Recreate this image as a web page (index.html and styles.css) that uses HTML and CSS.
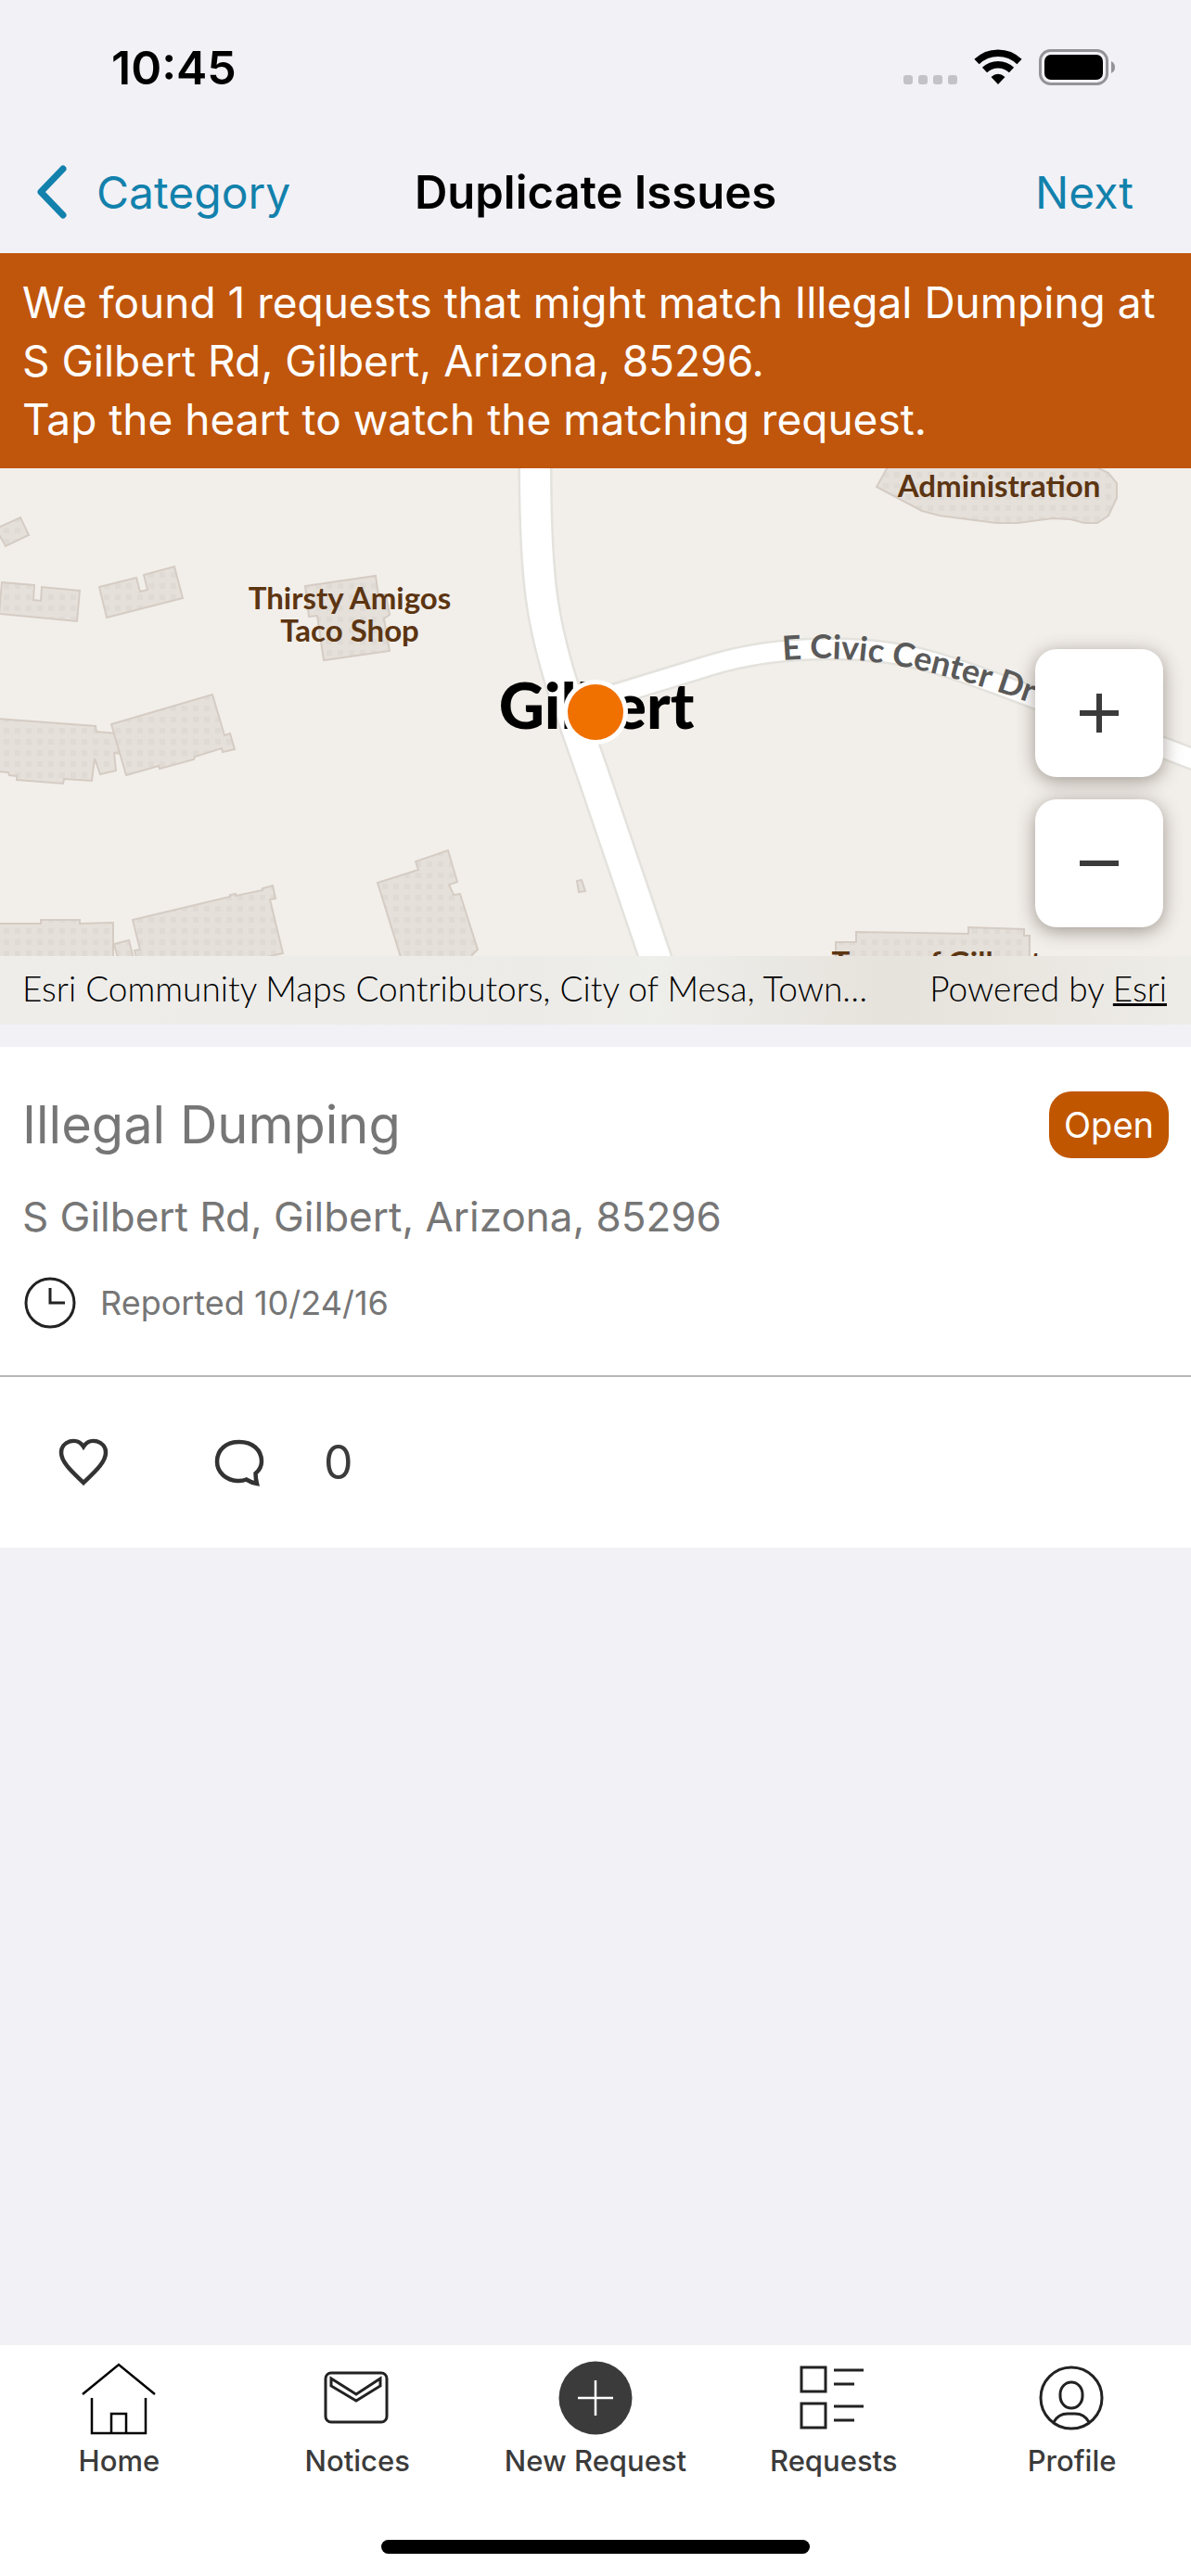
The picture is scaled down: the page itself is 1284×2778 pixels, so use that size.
FILE: index.html
```
<!DOCTYPE html>
<html lang="en">
<head>
  <meta charset="UTF-8" />
  <meta name="viewport" content="width=device-width, initial-scale=1.0"/>
  <title>Duplicate Issues</title>
  <link rel="stylesheet" href="styles.css">
</head>
<body>
  <div class="app">
    <!-- Status bar -->
    <div class="status-bar">
      <span class="time">10:45</span>
      <div class="status-icons">
        <svg width="58" height="39" viewBox="0 0 58 39" fill="#c3c2c7">
          <rect x="0" y="28" width="10" height="10" rx="3"/>
          <rect x="16" y="28" width="10" height="10" rx="3"/>
          <rect x="32" y="28" width="10" height="10" rx="3"/>
          <rect x="48" y="28" width="10" height="10" rx="3"/>
        </svg>
        <svg width="52" height="39" viewBox="0 0 52 39" fill="none" stroke="#000">
          <path d="M3 13.5 A33 33 0 0 1 49 13.5" stroke-width="7.5"/>
          <path d="M11.5 22.5 A21 21 0 0 1 40.5 22.5" stroke-width="7.5"/>
          <path d="M18.5 30 Q26 23.5 33.5 30 L26 38 Z" fill="#000" stroke="none"/>
        </svg>
        <svg width="83" height="39" viewBox="0 0 83 39">
          <rect x="1.5" y="1.5" width="72" height="36" rx="11" fill="none" stroke="#949397" stroke-width="3"/>
          <rect x="6" y="6" width="63" height="27" rx="7"/>
          <path d="M78 13 Q82 15 82 19.5 Q82 24 78 26 Z" fill="#949397"/>
        </svg>
      </div>
    </div>

    <!-- Navigation -->
    <header class="nav-bar">
      <button class="nav-btn back">
        <svg width="32" height="58" viewBox="0 0 32 58" fill="none" stroke="#1281ac" stroke-width="7" stroke-linecap="round" stroke-linejoin="round">
          <path d="M28 4 L4 29 L28 54"/>
        </svg>
        Category
      </button>
      <h1>Duplicate Issues</h1>
      <button class="nav-btn next">Next</button>
    </header>

    <main class="main">
      <p class="banner">We found 1 requests that might match Illegal Dumping at S Gilbert Rd, Gilbert, Arizona, 85296.<br>Tap the heart to watch the matching request.</p>

      <!-- Map -->
      <section class="map">
        <svg class="map-canvas" viewBox="0 0 1284 600" preserveAspectRatio="xMidYMid slice">
          <defs>
            <pattern id="dots" width="12" height="12" patternUnits="userSpaceOnUse">
              <rect width="12" height="12" fill="#e5e0da"/>
              <rect x="4" y="4" width="6" height="6" fill="#dfdad4"/>
            </pattern>
            <path id="civicLabel" d="M844 207 C930 200 1010 212 1180 279"/>
          </defs>

          <!-- buildings -->
          <g fill="url(#dots)" stroke="#d5ccc4" stroke-width="2">
            <path d="M-4 65 L22 53 L31 72 L6 84 L-4 66 Z"/>
            <path d="M2 123 L37 126 L36 142 L44 143 L45 128 L86 132 L83 165 L-1 157 Z"/>
            <path d="M107 128 L147 118 L151 133 L159 131 L155 115 L188 106 L197 140 L115 161 Z"/>
            <path d="M329 127 L405 116 L408 137 L416 136 L420 158 L414 162 L420 197 L349 207 L342 159 L333 160 Z"/>
            <path d="M-4 270 L103 278 L104 284 L126 286 L132 308 L123 307 L125 326 L108 330 L102 313 L99 337 L69 335 L68 340 L18 336 L18 332 L10 331 L9 328 L-4 327 Z"/>
            <path d="M120 276 L229 244 L242 288 L248 286 L253 303 L240 306 L239 302 L210 311 L209 314 L172 324 L171 321 L136 331 Z"/>
            <path d="M-4 491 L44 491 L44 487 L86 487 L86 491 L122 490 L122 540 L-4 540 Z"/>
            <path d="M123 513 L139 509 L142 521 L147 540 L130 540 Z"/>
            <path d="M143 487 L248 462 L248 460 L254 459 L254 461 L283 455 L283 453 L294 450 L297 464 L291 465 L305 523 L240 538 L150 538 L145 520 L151 519 Z"/>
            <path d="M407 447 L451 433 L448 424 L483 412 L493 446 L484 449 L489 460 L496 459 L515 519 L508 526 L510 540 L436 540 Z"/>
            <path d="M622 445 L627 444 L631 456 L624 457 Z"/>
            <path d="M959 -5 L945 20 L994 46 L1013 51 L1074 59 L1097 59 L1135 54 L1154 55 L1169 59 L1183 59 L1195 51 L1204 32 L1204 16 L1195 5 L1178 -3 Z"/>
            <path d="M901 540 L901 511 L923 511 L923 500 L1044 502 L1044 495 L1104 497 L1104 504 L1110 504 L1110 540 Z"/>
          </g>

          <!-- roads: casing first, then the white surface -->
          <g fill="none" stroke="#e4e2dd">
            <path d="M577 -6 C577 120 584 170 612 252 L640 332 L712 544" stroke-width="37"/>
            <path d="M642 250 L767 212 C840 190 940 189 1005 209 C1060 224 1170 270 1290 315" stroke-width="25"/>
          </g>
          <g fill="none" stroke="#fff">
            <path d="M577 -6 C577 120 584 170 612 252 L640 332 L712 544" stroke-width="32"/>
            <path d="M630 254 L767 212 C840 190 940 189 1005 209 C1060 224 1170 270 1290 315" stroke-width="20"/>
          </g>

          <!-- labels -->
          <g class="poi-label">
            <text x="377" y="152">Thirsty Amigos</text>
            <text x="377" y="187">Taco Shop</text>
            <text x="1077" y="31">Administration</text>
            <text x="1010" y="545">Town of Gilbert</text>
          </g>
          <text class="road-label"><textPath href="#civicLabel">E Civic Center Dr</textPath></text>
          <text class="city-label" x="643" y="281">Gilbert</text>

          <circle cx="642" cy="263" r="35" fill="#fff"/>
          <circle cx="642" cy="263" r="30" fill="#f07000"/>
        </svg>

        <div class="zoom-controls">
          <button class="zoom-btn" aria-label="Zoom in">
            <svg width="42" height="42" viewBox="0 0 42 42" stroke="#3b3b3b" stroke-width="6">
              <path d="M0 21 H42 M21 0 V42"/>
            </svg>
          </button>
          <button class="zoom-btn" aria-label="Zoom out">
            <svg width="42" height="42" viewBox="0 0 42 42" stroke="#3b3b3b" stroke-width="6">
              <path d="M0 21 H42"/>
            </svg>
          </button>
        </div>

        <div class="attribution">
          <span>Esri Community Maps Contributors, City of Mesa, Town…</span>
          <span>Powered by <a href="#">Esri</a></span>
        </div>
      </section>

      <!-- Matching request -->
      <article class="card">
        <div class="card-body">
          <div class="card-head">
            <h2>Illegal Dumping</h2>
            <span class="badge">Open</span>
          </div>
          <p class="address">S Gilbert Rd, Gilbert, Arizona, 85296</p>
          <p class="reported">
            <svg width="60" height="56" viewBox="0 0 60 56" fill="none" stroke="#222" stroke-width="3">
              <circle cx="30" cy="28" r="26"/>
              <path d="M30 12 V28 H46"/>
            </svg>
            Reported 10/24/16
          </p>
        </div>
        <div class="card-actions">
          <button class="action" aria-label="Watch request">
            <svg width="54" height="52" viewBox="0 0 54 52" fill="none" stroke="#333" stroke-width="4.5">
              <path d="M27 48 C18 39 3 27 3 15.5 C3 3 20 -2 27 9 C34 -2 51 3 51 15.5 C51 27 36 39 27 48 Z"/>
            </svg>
          </button>
          <button class="action" aria-label="Comments">
            <svg width="54" height="52" viewBox="0 0 54 52" fill="none" stroke="#333" stroke-width="4.5">
              <path d="M34.5 44.5 C31 46 29 46 26.5 46 C13 46 3 37 3 25 C3 12.5 13 4 27 4 C41 4 51 12.5 51 25 C51 31 48 35 44.500 38 Q44.5 43 46 49 Q40 48 34.5 44.5 Z"/>
            </svg>
            <span>0</span>
          </button>
        </div>
      </article>
    </main>

    <!-- Tab bar -->
    <footer class="footer">
      <nav class="tabs">
        <a class="tab" href="#">
          <svg width="80" height="80" viewBox="0 0 80 80" fill="none" stroke="#000" stroke-width="2.5">
            <path d="M1 36 L40 4 L79 36"/>
            <path d="M11 40 V78 H69 V40"/>
            <path d="M32 78 V57 H48 V78"/>
          </svg>
          Home
        </a>
        <a class="tab" href="#">
          <svg width="80" height="80" viewBox="0 0 80 80" fill="none" stroke="#222" stroke-width="3">
            <rect x="6" y="13" width="66" height="53" rx="6"/>
            <path d="M12 19 L39 36 L65 19 V27 L39 43 L12 27 Z"/>
          </svg>
          Notices
        </a>
        <a class="tab" href="#">
          <svg width="80" height="80" viewBox="0 0 80 80">
            <circle cx="40" cy="40" r="39.5" fill="#3b3b3b"/>
            <path d="M21 40 H59 M40 21 V59" stroke="#fff" stroke-width="2.5"/>
          </svg>
          New Request
        </a>
        <a class="tab" href="#">
          <svg width="80" height="80" viewBox="0 0 80 80" fill="none" stroke="#222" stroke-width="3">
            <rect x="5" y="7" width="26" height="26"/>
            <rect x="5" y="46" width="26" height="26"/>
            <path d="M40 10 H72 M40 25 H62 M40 49 H72 M40 64 H62"/>
          </svg>
          Requests
        </a>
        <a class="tab" href="#">
          <svg width="80" height="80" viewBox="0 0 80 80" fill="none" stroke="#222" stroke-width="3">
            <circle cx="39" cy="40" r="33"/>
            <rect x="27" y="23" width="24" height="28" rx="12" ry="13"/>
            <path d="M20 66 Q25 57 35 57 H43 Q53 57 58 66"/>
          </svg>
          Profile
        </a>
      </nav>
      <div class="home-indicator"></div>
    </footer>
  </div>
</body>
</html>
```
FILE: styles.css
```
* {
  box-sizing: border-box;
}

body {
  margin: 0;
  font-family: Inter, 'Liberation Sans', sans-serif;
  background-color: #f2f1f6;
  color: #000;
}

h1, h2, p {
  margin: 0;
  font-weight: 400;
}

button {
  font-family: inherit;
  border: none;
  padding: 0;
  background: none;
  cursor: pointer;
}

svg {
  display: block;
  flex-shrink: 0;
}

.app {
  display: flex;
  flex-direction: column;
  min-height: 100vh;
}

.status-bar {
  display: flex;
  justify-content: space-between;
  align-items: center;
  height: 145px;
  padding: 0 81px 0 120px;
}

.time {
  font-size: 50px;
  font-weight: 600;
}

.status-icons {
  display: flex;
  gap: 18px;
}

.nav-bar {
  display: grid;
  grid-template-columns: 1fr auto 1fr;
  align-items: center;
  height: 128px;
  padding-bottom: 4px;
}

.nav-bar h1 {
  font-size: 49px;
  font-weight: 600;
}

.nav-btn {
  display: flex;
  align-items: center;
  gap: 32px;
  color: #1281ac;
  font-size: 48px;
}

.back {
  padding-left: 40px;
}

.next {
  justify-self: end;
  padding-right: 62px;
}

.main {
  flex-grow: 1;
}

.banner {
  padding: 22px 24px 21px;
  background-color: #c0560c;
  color: #fff;
  font-size: 46px;
  line-height: 63px;
}

/* Map */
.map {
  position: relative;
  height: 600px;
  background-color: #f2efea;
  overflow: hidden;
}

.map-canvas {
  width: 100%;
  height: 100%;
}

.map text {
  font-family: Lato, sans-serif;
  font-weight: 700;
}

.poi-label {
  font-size: 33px;
  fill: #5c3512;
  text-anchor: middle;
}

.road-label {
  font-size: 36px;
  fill: #5a5a5a;
}

.map .city-label {
  font-size: 68px;
  font-weight: 900;
  text-anchor: middle;
}

.zoom-controls {
  position: absolute;
  right: 30px;
  bottom: 105px;
  display: flex;
  flex-direction: column;
  gap: 24px;
}

.zoom-btn {
  display: flex;
  align-items: center;
  justify-content: center;
  width: 138px;
  height: 138px;
  border-radius: 23px;
  background-color: #fff;
  box-shadow: 0 4px 20px rgba(60, 45, 35, 0.45);
}

.attribution {
  position: absolute;
  left: 0;
  right: 0;
  bottom: 0;
  display: flex;
  justify-content: space-between;
  padding: 0 26px 4px 24px;
  background: linear-gradient(90deg, #eeedea, #ecebe8 45%, #eeeeea 55%, #e6e2dc 75%, #eeece7);
  font-family: Lato, sans-serif;
  font-size: 37px;
  font-weight: 300;
  line-height: 70px;
}

.attribution a {
  color: inherit;
}

/* Card */
.card {
  margin-top: 24px;
  background-color: #fff;
  color: #767676;
}

.card-body {
  padding: 48px 24px 50px;
  border-bottom: 2px solid #b8b8b8;
}

.card-head {
  display: flex;
  justify-content: space-between;
  align-items: center;
}

.card-head h2 {
  font-size: 56px;
  line-height: 72px;
}

.badge {
  padding: 0 16px;
  border-radius: 24px;
  background-color: #c05600;
  color: #fff;
  font-size: 38px;
  line-height: 72px;
}

.address {
  margin-top: 36px;
  font-size: 44px;
  line-height: 54px;
}

.reported {
  display: flex;
  align-items: center;
  gap: 24px;
  margin-top: 38px;
  font-size: 36px;
}

.card-actions {
  display: flex;
  gap: 114px;
  padding: 60px 63px;
}

.action {
  display: flex;
  align-items: center;
  gap: 64px;
  height: 64px;
  color: #3b3b3b;
  font-size: 50px;
}

/* Tab bar */
.footer {
  padding: 17px 0 24px;
  background-color: #fff;
}

.tabs {
  display: grid;
  grid-template-columns: repeat(5, 1fr);
}

.tab {
  display: flex;
  flex-direction: column;
  align-items: center;
  gap: 8px;
  color: #3b3b3b;
  font-size: 31px;
  font-weight: 500;
  line-height: 40px;
  text-decoration: none;
}

.home-indicator {
  width: 36%;
  height: 15px;
  margin: 65px auto 0;
  border-radius: 8px;
  background-color: #000;
}
```
